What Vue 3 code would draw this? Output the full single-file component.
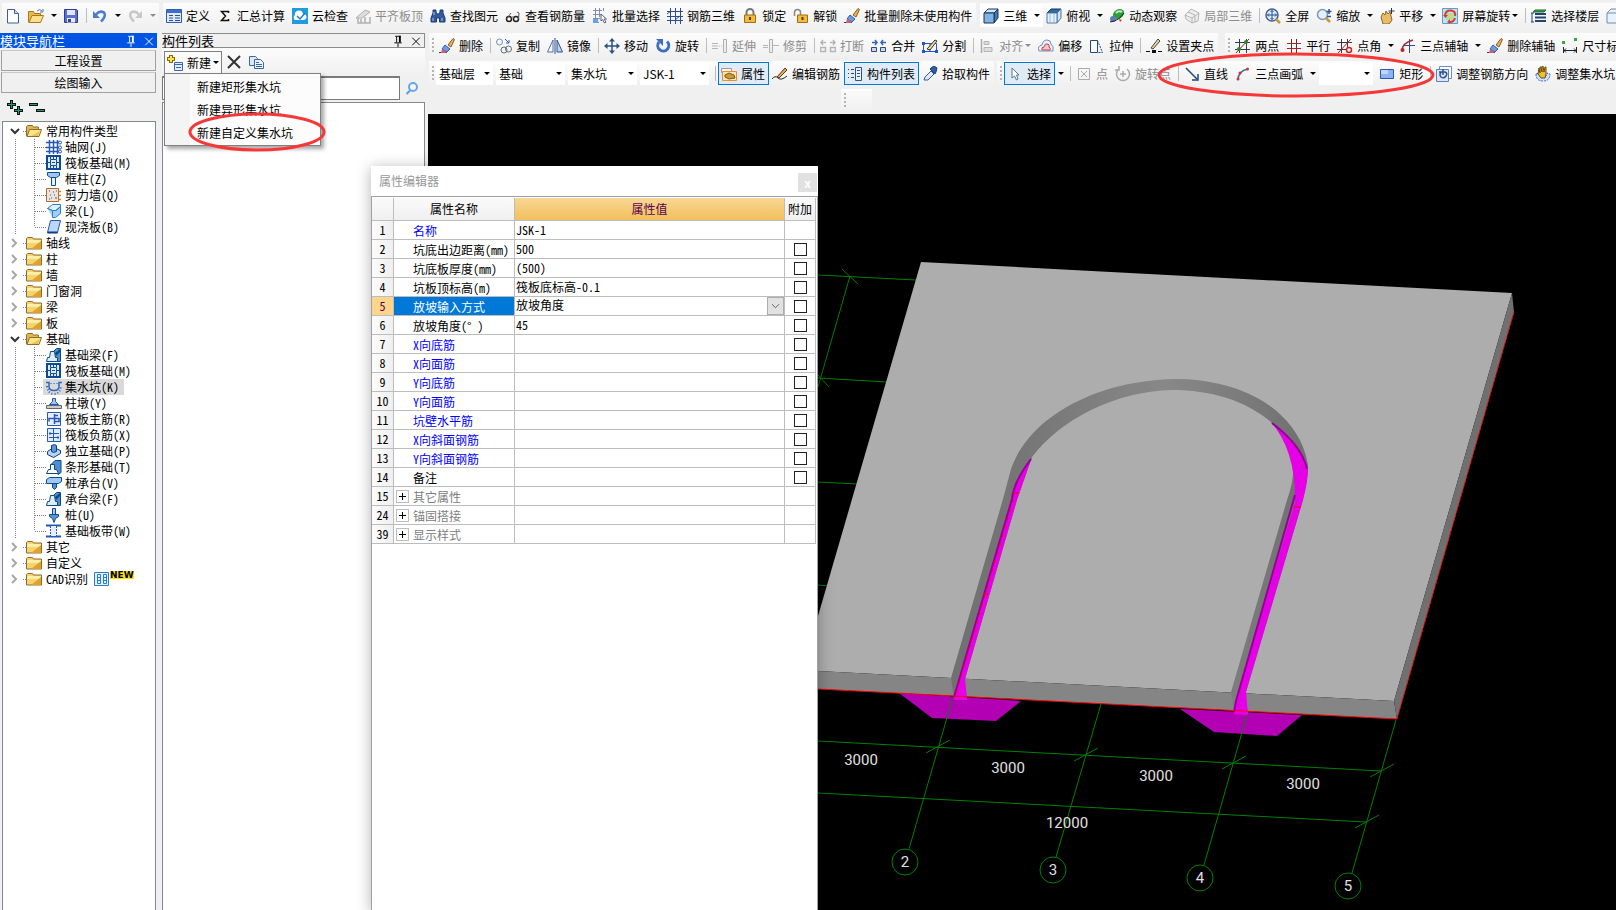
<template>
  <div class="app">
    <header class="toolbar-row top-row">
      <div v-for="(bar, b) in topBars" :key="b" class="bar">
        <template v-for="(tool, i) in bar" :key="i">
          <span v-if="tool.sep" class="sep"></span>
          <template v-else>
            <button
              type="button"
              class="tool"
              :class="{ white: tool.white }"
              :disabled="tool.off"
              :aria-label="tool.label || tool.icon"
            >
              <svg class="icon" viewBox="0 0 16 16" v-html="icons[tool.icon]"></svg>
              <span v-if="tool.label" class="label">{{ tool.label }}</span>
              <i v-if="tool.menu" class="arrow menu-arrow"></i>
            </button>
            <button
              v-if="tool.split"
              type="button"
              class="split"
              :class="{ white: tool.white }"
              :disabled="tool.off"
              aria-label="更多"
            >
              <i class="arrow"></i>
            </button>
          </template>
        </template>
      </div>
    </header>

    <div class="body">
      <!-- Module navigation -->
      <aside class="nav">
        <div class="panel-title active">
          <span class="title-text">模块导航栏</span>
          <svg class="title-icon" viewBox="0 0 16 16" v-html="icons.pin"></svg>
          <svg class="title-icon" viewBox="0 0 16 16" v-html="icons.close"></svg>
        </div>
        <button type="button" class="nav-tab">工程设置</button>
        <button type="button" class="nav-tab">绘图输入</button>
        <div class="nav-tools">
          <button type="button" aria-label="展开全部">
            <svg class="icon" viewBox="0 0 16 16" v-html="icons.expand"></svg>
          </button>
          <button type="button" aria-label="折叠全部">
            <svg class="icon" viewBox="0 0 16 16" v-html="icons.collapse"></svg>
          </button>
        </div>
        <ul class="tree">
          <li v-for="group in tree" :key="group.name">
            <div class="tree-root">
              <svg class="root-guide" viewBox="0 0 23 16">
                <path v-if="group.children" d="M8 6l4 4 4-4" fill="none" stroke="#333" stroke-width="2" />
                <path v-else d="M9 4l4 4-4 4" fill="none" stroke="#a6a6a6" stroke-width="2" />
                <path d="M20 8.5h3" stroke="#808080" stroke-dasharray="1 1" />
              </svg>
              <svg
                class="icon"
                viewBox="0 0 16 16"
                v-html="group.children ? icons.folderOpen : icons.folder"
              ></svg>
              <span class="root-name"><span v-if="group.prefix" class="half">{{ group.prefix }}</span>{{ group.name }}</span>
              <template v-if="group.isNew">
                <svg class="icon cad-icon" viewBox="0 0 16 16" v-html="icons.cad"></svg>
                <span class="new-tag">NEW</span>
              </template>
            </div>
            <ul v-if="group.children">
              <li v-for="(item, i) in group.children" :key="item[1]" class="tree-child">
                <svg class="child-guide" viewBox="0 0 40 16">
                  <g stroke="#808080" stroke-dasharray="1 1">
                    <path d="M12.5 0v16" />
                    <path :d="i === group.children.length - 1 ? 'M31.5 0v8' : 'M31.5 0v16'" />
                    <path d="M32 8.5h12" />
                  </g>
                </svg>
                <button type="button" class="tree-item" :class="{ selected: item[1] === selected }" @click="selected = item[1]">
                  <svg class="icon" viewBox="0 0 16 16" v-html="icons[item[2]]"></svg>
                  <span>{{ item[0] }}<span class="half">({{ item[3] }})</span></span>
                </button>
              </li>
            </ul>
          </li>
        </ul>
      </aside>

      <!-- Component list -->
      <section class="list-panel">
        <div class="panel-title">
          <span class="title-text">构件列表</span>
          <svg class="title-icon" viewBox="0 0 16 16" v-html="icons.pin"></svg>
          <svg class="title-icon" viewBox="0 0 16 16" v-html="icons.close"></svg>
        </div>
        <div class="list-tools">
          <div class="new-wrap">
            <button type="button" class="new-btn">
              <svg class="icon" viewBox="0 0 16 16" v-html="icons.create"></svg>
              <span class="label">新建</span>
              <i class="arrow menu-arrow"></i>
            </button>
            <div class="new-menu">
              <button v-for="entry in newMenu" :key="entry" type="button">{{ entry }}</button>
            </div>
            <svg class="mark mark-menu" viewBox="0 0 138 40">
              <ellipse cx="69" cy="20" rx="67" ry="18" />
            </svg>
          </div>
          <button type="button" class="list-btn" aria-label="删除">
            <svg class="icon" viewBox="0 0 16 16" v-html="icons.cross"></svg>
          </button>
          <button type="button" class="list-btn" aria-label="复制">
            <svg class="icon" viewBox="0 0 16 16" v-html="icons.docs"></svg>
          </button>
        </div>
        <div class="search">
          <input type="text" aria-label="搜索构件" />
          <button type="button" aria-label="搜索">
            <svg class="icon" viewBox="0 0 16 16" v-html="icons.search"></svg>
          </button>
        </div>
        <div class="list-body"></div>
      </section>

      <main class="main">
        <div class="toolbar-row edit-row">
          <div v-for="(bar, b) in editBars" :key="b" class="bar">
            <span class="grip"></span>
            <template v-for="(tool, i) in bar" :key="i">
              <span v-if="tool.sep" class="sep"></span>
              <template v-else>
                <button type="button" class="tool" :disabled="tool.off">
                  <svg class="icon" viewBox="0 0 16 16" v-html="icons[tool.icon]"></svg>
                  <span class="label">{{ tool.label }}</span>
                  <i v-if="tool.menu" class="arrow menu-arrow"></i>
                </button>
                <button v-if="tool.split" type="button" class="split" aria-label="更多">
                  <i class="arrow"></i>
                </button>
              </template>
            </template>
          </div>
        </div>

        <div class="toolbar-row draw-row">
          <div v-for="(bar, b) in drawBars" :key="b" class="bar">
            <span class="grip"></span>
            <template v-for="(tool, i) in bar" :key="i">
              <span v-if="tool.sep" class="sep"></span>
              <span v-else-if="tool.combo" class="combo" :class="tool.size">
                <select :aria-label="tool.combo">
                  <option>{{ tool.value }}</option>
                </select>
                <i class="arrow"></i>
              </span>
              <template v-else>
                <button type="button" class="tool" :class="{ on: tool.on }" :disabled="tool.off">
                  <svg class="icon" viewBox="0 0 16 16" v-html="icons[tool.icon]"></svg>
                  <span class="label">{{ tool.label }}</span>
                </button>
                <button v-if="tool.split" type="button" class="split" aria-label="更多">
                  <i class="arrow"></i>
                </button>
              </template>
            </template>
          </div>
          <svg class="mark mark-draw" viewBox="0 0 278 46">
            <ellipse cx="139" cy="23" rx="137" ry="21" />
          </svg>
        </div>

        <div class="toolbar-row spare-row">
          <div class="bar spare"><span class="grip"></span></div>
        </div>

        <!-- 3D view -->
        <svg class="scene" viewBox="428 114 1188 796" preserveAspectRatio="xMinYMin slice">
          <defs>
            <linearGradient id="ring" x1="0" x2="1" y1="0" y2="0">
              <stop offset="0" stop-color="#707070" />
              <stop offset="0.2" stop-color="#767676" />
              <stop offset="0.6" stop-color="#888" />
              <stop offset="1" stop-color="#707070" />
            </linearGradient>
          </defs>
          <g stroke="#008000" fill="none">
            <path d="M818 275L916 280M818 378L887 382M818 482L858 484M818 585L829 586" />
            <path d="M850 276L818 387M842 269L858 284M818 375L829 387" />
          </g>
          <polygon points="921,262 1512,293 1394,701 818,671 818,616" fill="#adadad" />
          <polygon points="818,671 1394,701 1397,719 818,689" fill="#858585" />
          <polygon points="1512,293 1514,312 1397,719 1394,701" fill="#707070" />
          <polygon points="899,693 932,718 996,721 1021,701" fill="#b400b4" />
          <polygon points="1180,709 1214,732 1277,736 1302,715" fill="#b400b4" />
          <path
            fill="url(#ring)"
            d="M951 678L1003 499L1011 469C1030 415 1100 379 1180 379C1250 381 1300 415 1308 465L1308 470L1303 500L1246 692L1248 714L1234 712L1231 692L1287 500Q1294 480 1293 468Q1288 438 1271 422C1245 400 1210 390 1172 390C1115 391 1060 420 1032 457L1017 500L965 679L967 700L954 698Z"
          />
          <path fill="#e600e6" d="M1032 457Q1014 481 1012 499L954 697L954 700L967 700L965 679L1017 500Z" />
          <path fill="none" stroke="#960096" stroke-width="2" d="M1031 459Q1014 481 1012 499L954 697" />
          <path fill="none" stroke="#f00" stroke-dasharray="3 6" d="M1013 500L956 693" />
          <path
            fill="#e600e6"
            d="M1271 422Q1301 444 1308 469Q1308 482 1303 500L1246 692L1248 715L1234 714L1236 701L1295 502Q1296 451 1271 422Z"
          />
          <path fill="none" stroke="#960096" stroke-width="2" d="M1272 423Q1302 446 1307 469M1295 495L1236 701L1234 712" />
          <g stroke="#f00" fill="none">
            <path d="M818 689L1397 719" />
            <path d="M1514 312L1397 719" stroke-dasharray="4 1" />
            <path d="M1013 493h6M983 594h5M1294 507h6" />
          </g>
          <g stroke="#008000" fill="none">
            <path v-for="axis in axes" :key="axis.no" :d="axis.line" />
            <path d="M818 741L1381 771M818 793L1366 822" />
            <path v-for="t in ticks" :key="t[0]" :d="`M${t[0] - 11} ${t[1] + 6}l24 -13`" />
            <circle v-for="axis in axes" :key="axis.no" :cx="axis.x" :cy="axis.y" r="13" />
          </g>
          <g class="scene-text">
            <text v-for="d in dims" :key="d[0]" :x="d[0]" :y="d[1]">{{ d[2] }}</text>
            <text v-for="axis in axes" :key="axis.no" :x="axis.x" :y="axis.y + 5">{{ axis.no }}</text>
          </g>
        </svg>
      </main>
    </div>

    <!-- Property editor -->
    <section class="props">
      <div class="props-title">
        <span>属性编辑器</span>
        <button type="button" aria-label="关闭">x</button>
      </div>
      <div class="props-body">
        <table>
          <colgroup>
            <col class="col-no" />
            <col class="col-name" />
            <col />
            <col class="col-extra" />
          </colgroup>
          <thead>
            <tr>
              <th></th>
              <th>属性名称</th>
              <th class="current">属性值</th>
              <th>附加</th>
            </tr>
          </thead>
          <tbody>
            <tr v-for="row in rows" :key="row.no" :class="{ picked: row.no === 5 }">
              <th class="half">{{ row.no }}</th>
              <td class="name" :class="row.tone">
                <div class="name-line">
                  <button v-if="row.tone === 'fold'" type="button" class="plus" aria-label="展开"></button>
                  <span><span v-if="row.axis" class="half">{{ row.axis }}</span>{{ row.name }}<span v-if="row.unit" class="half">{{ row.unit }}</span></span>
                </div>
              </td>
              <td class="value">
                <div v-if="row.no === 5" class="value-select">
                  <select aria-label="放坡输入方式">
                    <option>{{ row.text }}</option>
                  </select>
                  <svg viewBox="0 0 17 18"><path d="M4.5 7l4 4 4-4" fill="none" stroke="#555" /></svg>
                </div>
                <template v-else>{{ row.text }}<span class="half">{{ row.value }}</span></template>
              </td>
              <td class="extra">
                <input v-if="row.check" type="checkbox" :aria-label="'附加 ' + row.name" />
              </td>
            </tr>
          </tbody>
        </table>
      </div>
    </section>
  </div>
</template>

<script setup>
import { ref } from "vue";

const selected = ref("pit");

const sep = { sep: true };

const topBars = [
  [
    { icon: "file" },
    { icon: "open", split: true },
    { icon: "save" },
    sep,
    { icon: "undo", split: true },
    { icon: "redo", split: true, off: true },
  ],
  [
    { icon: "define", label: "定义" },
    { icon: "sigma", label: "汇总计算" },
    { icon: "cloud", label: "云检查" },
    { icon: "alignTop", label: "平齐板顶", off: true },
    { icon: "binoculars", label: "查找图元" },
    { icon: "glasses", label: "查看钢筋量" },
    { icon: "batch", label: "批量选择" },
    { icon: "rebar3d", label: "钢筋三维" },
    { icon: "lock", label: "锁定" },
    { icon: "unlock", label: "解锁" },
    { icon: "brush", label: "批量删除未使用构件" },
  ],
  [
    { icon: "cube", label: "三维", split: true, white: true },
    { icon: "cubeTop", label: "俯视", split: true },
    { icon: "orbit", label: "动态观察" },
    { icon: "partial", label: "局部三维", off: true },
    sep,
    { icon: "fullscreen", label: "全屏" },
    { icon: "zoom", label: "缩放", split: true },
    { icon: "pan", label: "平移", split: true },
    { icon: "screenRotate", label: "屏幕旋转", menu: true },
    sep,
    { icon: "floors", label: "选择楼层" },
    { icon: "wire" },
  ],
];

const editBars = [
  [
    { icon: "brush", label: "删除" },
    sep,
    { icon: "copy", label: "复制" },
    { icon: "mirror", label: "镜像" },
    sep,
    { icon: "move", label: "移动" },
    { icon: "rotate", label: "旋转" },
    sep,
    { icon: "extend", label: "延伸", off: true },
    { icon: "trim", label: "修剪", off: true },
    sep,
    { icon: "break", label: "打断", off: true },
    { icon: "merge", label: "合并" },
    { icon: "split", label: "分割" },
    sep,
    { icon: "align", label: "对齐", menu: true, off: true },
    { icon: "offset", label: "偏移" },
    { icon: "stretch", label: "拉伸" },
    sep,
    { icon: "gripPoint", label: "设置夹点" },
  ],
  [
    { icon: "twoPoint", label: "两点" },
    { icon: "parallel", label: "平行" },
    { icon: "angle", label: "点角", split: true },
    { icon: "threeAxis", label: "三点辅轴", split: true },
    { icon: "brush", label: "删除辅轴" },
    { icon: "dimension", label: "尺寸标" },
  ],
];

const drawBars = [
  [
    { combo: "楼层", value: "基础层", size: "narrow" },
    { combo: "类型", value: "基础" },
    { combo: "构件类型", value: "集水坑" },
    { combo: "构件", value: "JSK-1" },
    sep,
    { icon: "property", label: "属性", on: true },
    { icon: "editRebar", label: "编辑钢筋" },
    { icon: "list", label: "构件列表", on: true },
    { icon: "picker", label: "拾取构件" },
  ],
  [
    { icon: "cursor", label: "选择", on: true, split: true },
    sep,
    { icon: "point", label: "点", off: true },
    { icon: "rotatePoint", label: "旋转点", off: true },
    sep,
    { icon: "line", label: "直线" },
    { icon: "arc", label: "三点画弧", split: true },
    { combo: "画法", value: "", size: "tiny" },
    { icon: "rect", label: "矩形" },
    sep,
    { icon: "rebarDir", label: "调整钢筋方向" },
    { icon: "pitDir", label: "调整集水坑" },
  ],
];

const newMenu = ["新建矩形集水坑", "新建异形集水坑", "新建自定义集水坑"];

// child: [name, id, icon, shortcut]
const tree = [
  {
    name: "常用构件类型",
    children: [
      ["轴网", "grid", "grid", "J"],
      ["筏板基础", "raft-common", "raft", "M"],
      ["框柱", "column", "column", "Z"],
      ["剪力墙", "wall", "wall", "Q"],
      ["梁", "beam", "beam", "L"],
      ["现浇板", "slab", "slab", "B"],
    ],
  },
  { name: "轴线" },
  { name: "柱" },
  { name: "墙" },
  { name: "门窗洞" },
  { name: "梁" },
  { name: "板" },
  {
    name: "基础",
    children: [
      ["基础梁", "base-beam", "baseBeam", "F"],
      ["筏板基础", "raft", "raft", "M"],
      ["集水坑", "pit", "pit", "K"],
      ["柱墩", "pier", "pier", "Y"],
      ["筏板主筋", "raft-main", "raftMain", "R"],
      ["筏板负筋", "raft-neg", "raftNeg", "X"],
      ["独立基础", "isolated", "isolated", "P"],
      ["条形基础", "strip", "strip", "T"],
      ["桩承台", "cap", "cap", "V"],
      ["承台梁", "cap-beam", "baseBeam", "F"],
      ["桩", "pile", "pile", "U"],
      ["基础板带", "band", "band", "W"],
    ],
  },
  { name: "其它" },
  { name: "自定义" },
  { prefix: "CAD", name: "识别", isNew: true },
];

const rows = [
  { no: 1, name: "名称", tone: "blue", value: "JSK-1" },
  { no: 2, name: "坑底出边距离", unit: "(mm)", value: "500", check: true },
  { no: 3, name: "坑底板厚度", unit: "(mm)", value: "(500)", check: true },
  { no: 4, name: "坑板顶标高", unit: "(m)", text: "筏板底标高", value: "-0.1", check: true },
  { no: 5, name: "放坡输入方式", text: "放坡角度", check: true },
  { no: 6, name: "放坡角度", unit: "(° )", value: "45", check: true },
  { no: 7, axis: "X", name: "向底筋", tone: "blue", check: true },
  { no: 8, axis: "X", name: "向面筋", tone: "blue", check: true },
  { no: 9, axis: "Y", name: "向底筋", tone: "blue", check: true },
  { no: 10, axis: "Y", name: "向面筋", tone: "blue", check: true },
  { no: 11, name: "坑壁水平筋", tone: "blue", check: true },
  { no: 12, axis: "X", name: "向斜面钢筋", tone: "blue", check: true },
  { no: 13, axis: "Y", name: "向斜面钢筋", tone: "blue", check: true },
  { no: 14, name: "备注", check: true },
  { no: 15, name: "其它属性", tone: "fold" },
  { no: 24, name: "锚固搭接", tone: "fold" },
  { no: 39, name: "显示样式", tone: "fold" },
];

const axes = [
  { no: 2, x: 905, y: 862, line: "M953 697L909 849" },
  { no: 3, x: 1053, y: 870, line: "M1101 704L1056 857" },
  { no: 4, x: 1200, y: 878, line: "M1247 715L1204 865" },
  { no: 5, x: 1348, y: 886, line: "M1396 720L1352 873" },
];

const ticks = [
  [937, 747],
  [1085, 755],
  [1233, 763],
  [1381, 771],
  [1366, 822],
];

const dims = [
  [861, 765, "3000"],
  [1008, 773, "3000"],
  [1156, 781, "3000"],
  [1303, 789, "3000"],
  [1067, 828, "12000"],
];

const icons = {
  file: '<path d="M2.500 1.500h7l4 4v9.500h-11z" fill="#fff" stroke="#3b5f94"/><path d="M9.500 1.500v4h4" fill="#cfe0f5" stroke="#3b5f94"/>',
  open: '<path d="M.5 14V3.500h5l1 2h6V14z" fill="#e9b94a" stroke="#a8781c"/><path d="M1 14.500l3-7h11.500l-3 7z" fill="#ffe08a" stroke="#a8781c"/><path d="M9 3q3-3 5 0M15 1v3h-3" fill="none" stroke="#5a789c"/>',
  save: '<path d="M1.500 1.500h12l1 1v12h-13z" fill="#5a6fd0" stroke="#2d3c96"/><path d="M4 2h8v5H4z" fill="#dfe8fa"/><path d="M4 10h8v4.500H4z" fill="#e8ecf5"/><path d="M5 11h3v3H5z" fill="#33418c"/>',
  undo: '<path d="M4 6.500Q8 2 12 4.500Q14.500 8 9 13.500" fill="none" stroke="#4a7bd0" stroke-width="2.500"/><path d="M1 3v7h7z" fill="#4a7bd0"/>',
  redo: '<path d="M12 6.500Q8 2 4 4.500Q1.500 8 7 13.500" fill="none" stroke="#c8c8c8" stroke-width="2.500"/><path d="M15 3v7H8z" fill="#c8c8c8"/>',
  define: '<path d="M.5 1.500h15v13H.5z" fill="#dfeaff" stroke="#2f5db0"/><path d="M1 2h14v3H1z" fill="#3f6fc8"/><path d="M3 7.500h4M3 10h4M3 12.500h4M9 7.500h5M9 10h5M9 12.500h5" stroke="#2f4f90"/>',
  sigma: '<path d="M11.500 5V3.500H4.500L8.500 8l-4 4.500h7V11" fill="none" stroke="#111" stroke-width="1.500"/>',
  cloud: '<path d="M0 0h16v16H0z" fill="#1f9be0"/><path d="M3 12a3 3 0 010-5a4 4 0 018-1a3 3 0 011 6z" fill="#fff"/><path d="M5 8l3 3 5-6" fill="none" stroke="#1f7fc0" stroke-width="1.500"/>',
  alignTop: '<path d="M1 10L10 2l5 2-8 6z" fill="#ddd" stroke="#b0b0b0"/><path d="M3 10v5h12V9M6 15v-4M10 15v-6" fill="none" stroke="#b0b0b0" stroke-width="1.500"/>',
  binoculars: '<path d="M3 2h3v2l1 2h2l1-2V2h3v3l2 5v4H9.500v-4h-3v4H1v-4l2-5z" fill="#345ba0" stroke="#1d3a70"/><path d="M3 10v3M12 10v3M4 4v3" stroke="#a9c6f5"/>',
  glasses: '<circle cx="4" cy="11" r="2.500" fill="none" stroke="#222" stroke-width="1.500"/><circle cx="11" cy="11" r="2.500" fill="none" stroke="#222" stroke-width="1.500"/><path d="M6 10q1.500-2 3 0M13.500 11L14 5l-2-1M1.500 11L6 5" fill="none" stroke="#555"/>',
  batch: '<path d="M1 2.500h9M1 6.500h9M1 10.500h7M3.500 0v11M7.500 0v9M1 14.500h6M11.500 0v3" stroke="#8090ac"/><path d="M1 11h5v4H1z" fill="#6aa0f0"/><path d="M9 6v7l1.500-1.500 2 3.500 1.500-1-2-3h2.500z" fill="#fff" stroke="#52637c"/>',
  rebar3d: '<path d="M0 3.500h16M0 8.500h16M0 12.500h16M3.500 0v16M8.500 0v16M13.500 0v16M0 6l4-3M8 12l5-4" stroke="#2e4c8c" fill="none"/>',
  lock: '<path d="M4.500 7V4.500a3.500 3.500 0 017 0V7" fill="none" stroke="#777" stroke-width="2"/><path d="M2.500 7h11v7.500h-11z" fill="#f3bc3e" stroke="#a36e10"/><path d="M8 9v3" stroke="#5c3b05" stroke-width="2"/>',
  unlock: '<path d="M1.500 8V4.500a3 3 0 016 0V7" fill="none" stroke="#888" stroke-width="1.500"/><path d="M4.500 7h10v7.500h-10z" fill="#f3bc3e" stroke="#a36e10"/><path d="M9.500 9v3" stroke="#5c3b05" stroke-width="2"/>',
  brush: '<path d="M0 14.500h8" stroke="#223a7a"/><path d="M9 7l5-6.500 1.500 1L12 9z" fill="#e8b15a" stroke="#8b5a1c"/><path d="M6 7l5 4-3 3-5-3z" fill="#6f9be0" stroke="#2f5db0"/><path d="M3 11l5 3-2 1H2z" fill="#d0606a"/>',
  cube: '<path d="M1 5l4-4h10l-4 4z" fill="#cfe6fa" stroke="#1d3557"/><path d="M11 5l4-4v9l-4 5z" fill="#3f78b5" stroke="#1d3557"/><path d="M1 5h10v10H1z" fill="#7fb4e3" stroke="#1d3557"/>',
  cubeTop: '<path d="M1 5l4-4h10l-4 4z" fill="#2f6aa8" stroke="#1d3557"/><path d="M11 5l4-4v9l-4 5z" fill="#cfe2f5" stroke="#52789c"/><path d="M1 5h10v10H1z" fill="#e4f0fb" stroke="#52789c"/><path d="M4 6v8M8 6v8" stroke="#9dbbd8"/>',
  orbit: '<ellipse cx="9.500" cy="6" rx="6" ry="4.500" transform="rotate(-35 9.500 6)" fill="#2f9e3c"/><path d="M7 5q3-3 6-1" stroke="#bff0b8" fill="none" stroke-width="2"/><circle cx="4" cy="11" r="3" fill="#5a7fae"/><path d="M1 14Q10 13 15 5" stroke="#223" fill="none"/><path d="M10 11l3 1-2 2z" fill="#d33"/>',
  partial: '<path d="M1 7l6-6 8 4-1 8-6 2-6-4zM1 7l7 3 7-5M8 10v5M4 4l7 3v7" fill="#eee" stroke="#b5b5b5"/>',
  fullscreen: '<circle cx="7" cy="7" r="6" fill="#e3effc" stroke="#41618f" stroke-width="1.500"/><path d="M7 2.500v9M2.500 7h9M5.500 4L7 2.500 8.500 4M5.500 10L7 11.500 8.500 10M4 5.500L2.500 7 4 8.500M10 5.500L11.500 7 10 8.500" fill="none" stroke="#1f4a96"/><path d="M11 11l4 4" stroke="#c49a3a" stroke-width="2.500"/>',
  zoom: '<circle cx="6.500" cy="6.500" r="5" fill="#e3effc" stroke="#7c97b8" stroke-width="1.500"/><path d="M10 10l4 4" stroke="#c49a3a" stroke-width="2.500"/><path d="M13 1v5M10.500 3.500h5M11 8.500h4" stroke="#2f5596" stroke-width="1.500"/>',
  pan: '<path d="M2 9l2-4 2 2 1-4 2 3 2-2 1 4 1 4-3 4H4z" fill="#e9bd6b" stroke="#8a6425"/><path d="M12.500 0v6M9.500 3h6" stroke="#333"/>',
  screenRotate: '<path d="M.5 .5h15v15H.5z" fill="#bfe0f5" stroke="#5aa0cc"/><path d="M4 5h8v7H4z" fill="#b5dc9a"/><path d="M3 7q1-5 6-4.500T13 8M13 10q-1 4-5 4" fill="none" stroke="#e0382c" stroke-width="2"/><path d="M1 7h5l-2.500 3zM8 11v5l-3-2z" fill="#e0382c"/>',
  floors: '<path d="M4 2h11l-2 2H2z" fill="#3aa655" stroke="#1c6a34"/><path d="M4 6h11M4 9.500h11M4 13h11" stroke="#24446e" stroke-width="2"/><path d="M1 5v9M0 5h3M0 14h3" stroke="#24446e"/>',
  wire: '<path d="M1 5l4-4h10v10l-4 4H1zM1 5h10v10M11 5l4-4" fill="#e9f1fa" stroke="#6d8fb5"/>',
  copy: '<circle cx="3.500" cy="4" r="3" fill="none" stroke="#7690b0"/><circle cx="8" cy="12" r="3" fill="none" stroke="#5d6f85"/><circle cx="12.500" cy="11" r="3" fill="none" stroke="#5d6f85"/><path d="M9 1l4 4M13 2v3h-3" fill="none" stroke="#2f5db0"/>',
  mirror: '<path d="M6 2v12H.500z" fill="#fff" stroke="#4d6fa8"/><path d="M10 2v12h5.500z" fill="#c3d5f0" stroke="#2d4f90"/><path d="M8 0v16" stroke="#2d4f90"/>',
  move: '<path d="M8 2v12M2 8h12" stroke="#2c5282" stroke-width="1.500"/><path d="M8 0l3 3.500H5zM8 16l3-3.500H5zM0 8l3.500-3v6zM16 8l-3.500-3v6z" fill="#2c5282"/>',
  rotate: '<path d="M4 4a5.500 5.500 0 108-.5" fill="none" stroke="#3c6ec4" stroke-width="3"/><path d="M1 1h7v7z" fill="#3c6ec4"/>',
  extend: '<path d="M0 8h6M0 5.500h6M0 10.500h6" stroke="#b5b5b5"/><path d="M7 8h3" stroke="#b5b5b5" stroke-dasharray="1 1"/><path d="M11.500 1.500h3v13h-3z" fill="#eee" stroke="#b0b0b0"/>',
  trim: '<path d="M0 7.500h5M0 9.500h5M10 7.500h6" stroke="#b5b5b5"/><path d="M6.500 1.500h3v13h-3z" fill="#eee" stroke="#b0b0b0"/>',
  break: '<path d="M1 4.500h5M10 4.500h5M3 2L1 4.500 3 7M13 2l2 2.500L13 7M.500 9.500h5v4h-5zM10.500 9.500h5v4h-5z" fill="none" stroke="#b5b5b5" stroke-width="1.500"/>',
  merge: '<path d="M1 4.500h5M10 4.500h5M4 2l2 2.500L4 7M12 2l-2 2.500L12 7" fill="none" stroke="#3465b5" stroke-width="1.500"/><path d="M.500 9.500h5v4h-5zM9.500 9.500h5v4h-5z" fill="#cfd9e8" stroke="#2c4a7a"/>',
  split: '<path d="M1.500 5.500h13v8h-13zM8 5v9" fill="none" stroke="#2255cc"/><path d="M0 4h3v3H0zM0 12h3v3H0zM13 12h3v3h-3z" fill="#2255cc"/><path d="M5 11l8-9 2 1-7 9z" fill="#eed9a0" stroke="#333"/>',
  align: '<path d="M2.500 1v14" stroke="#aaa" stroke-width="1.500"/><path d="M5 3.500h5v3H5zM5 9.500h8v4H5z" fill="#ddd" stroke="#b5b5b5"/>',
  offset: '<path d="M1 13q-2-5 3-6 1-5 5-5 4 0 4 4 3 2 2 7z" fill="#e8f1fc" stroke="#6a8fc0"/><path d="M4 12q-1-3 2-3 1-4 3-3 3 0 2 3 2 1 1 3z" fill="#f7c9c9" stroke="#d04040"/>',
  stretch: '<path d="M1.500 2.500h7v12h-7z" fill="#fff" stroke="#1f4a86"/><path d="M8.500 2.500l5 12h-5" fill="none" stroke="#1f4a86" stroke-dasharray="2 1"/>',
  gripPoint: '<path d="M0 13.500h16" stroke="#111" stroke-dasharray="4 2"/><path d="M5 10l7-9 2 2-7 8z" fill="#ead7a0" stroke="#444"/><path d="M6 12h4v3H6z" fill="#111"/>',
  twoPoint: '<path d="M4.500 1v14M11.500 1v14M0 4.500h15M0 11.500h15" stroke="#333c4a"/><path d="M1 15L14 1" stroke="#992020"/><circle cx="4" cy="11" r="2" fill="#2a8a2a"/><circle cx="11" cy="4" r="2" fill="#2a8a2a"/>',
  parallel: '<path d="M5.500 1v14M10.500 1v14" stroke="#333c4a"/><path d="M1 5.500h14M1 10.500h14" stroke="#b02020"/>',
  angle: '<path d="M4.500 1v14M10.500 1v8M0 4.500h15M0 11.500h9" stroke="#333c4a"/><path d="M1 15L14 1" stroke="#b02020"/><circle cx="12" cy="12" r="2.500" fill="#fff" stroke="#d02020" stroke-width="1.500"/>',
  threeAxis: '<path d="M2 13Q2 5 13 2" fill="none" stroke="#c02020" stroke-width="1.500"/><path d="M9.500 1v14M3 7.500h12" stroke="#2e4c8c"/><circle cx="2.500" cy="12" r="2" fill="#c02020"/>',
  dimension: '<path d="M0 3h3v3H0zM12 0h3v3h-3z" fill="#2faa3a"/><path d="M1.500 9v6M14.500 9v6M2 12.500h12M4 10.500l-2 2 2 2M12 10.500l2 2-2 2" fill="none" stroke="#222"/>',
  property: '<path d="M.5 2.500h10v4H.5z" fill="#f7f7f7" stroke="#999"/><path d="M1.500 5.500h14v9h-14z" fill="#ffe3b0" stroke="#f08a2a"/><path d="M4 9l4-2 5 2 1 3-6 1-4-2z" fill="#c79a3c" stroke="#7a5a18"/>',
  editRebar: '<path d="M0 13q3-4 6-1t9-2" fill="none" stroke="#222"/><path d="M5 11l8-9 2 2-8 8z" fill="#e0a860" stroke="#5a3a14"/>',
  list: '<path d="M1 3.500h1M4 3.500h3M1 7.500h1M4 7.500h3M1 11.500h1M4 11.500h3" stroke="#444"/><path d="M8.500 1.500h6v13h-6z" fill="#e9f1fc" stroke="#2f4f90"/><path d="M10 4.500h3M10 7.500h3M10 10.500h3" stroke="#2f4f90"/>',
  picker: '<path d="M2 14l1-3 6-6 3 3-6 6z" fill="#dceafb" stroke="#335c99"/><path d="M8 3l5 5 1-2 1-4-3-2-3 2z" fill="#2f5fa8" stroke="#1d3f78"/>',
  cursor: '<path d="M5 2v10l2.500-2 2 4 1.500-1-1.500-4H12z" fill="#fff" stroke="#5b7393"/>',
  point: '<path d="M2.500 2.500h11v11h-11z" fill="none" stroke="#aaa"/><path d="M5 5l6 6M11 5l-6 6" stroke="#aaa"/>',
  rotatePoint: '<path d="M4 3a6.500 6.500 0 108 0M4 0v4H0M8 5v6M5 8h6" fill="none" stroke="#aaa" stroke-width="1.500"/>',
  line: '<path d="M2 2l11 11" stroke="#22447a" stroke-width="1.500"/><path d="M14 8v6H8" fill="none" stroke="#22447a" stroke-width="1.500"/>',
  arc: '<path d="M3 14Q3 5 13 3" fill="none" stroke="#3a66b0" stroke-width="1.500"/><circle cx="12.500" cy="3" r="1.500" fill="#c33"/><circle cx="5" cy="7" r="1.500" fill="#c33"/><circle cx="3" cy="13" r="1.500" fill="#c33"/>',
  rect: '<path d="M1.500 3.500h13v9h-13z" fill="#8fb2f5" stroke="#2b55b8"/><path d="M2 4h7v4H2z" fill="#c3d6fb"/>',
  rebarDir: '<path d="M3.500 .5h12v12h-12z" fill="#fff" stroke="#6d8fc0"/><path d="M.5 3.500h12v12H.5z" fill="#dce8f8" stroke="#5c7fb8"/><path d="M3 6h6q3 1 1 4t-5 1q-2-2 0-5M7 3v6" fill="none" stroke="#2e5490" stroke-width="1.500"/>',
  pitDir: '<path d="M1 8q0 7 7 7t7-7l-3-1q0 4-4 4T4 7z" fill="#cfe2fb" stroke="#2f68c0" stroke-dasharray="2 1"/><path d="M4 2l1 5 0-6h1l1 5V0h1l1 6 1-5h1v7l-1 4H6L3 8z" fill="#f0c030" stroke="#6a4a10"/>',
  pin: '<path d="M5 3.500h6M6.500 4v6M4 10.500h8M8 11v4" fill="none" stroke="currentColor"/><path d="M9 3h2v7H9z" fill="currentColor"/>',
  close: '<path d="M4 5l8 8M12 5l-8 8" stroke="currentColor"/>',
  expand: '<path d="M0 5.500h9M4.500 1v9M7 11.500h9M11.500 7v9" stroke="#111" stroke-width="3"/><path d="M1 5.500h7M4.500 2v7M8 11.500h7M11.500 8v7" stroke="#1f9a84"/>',
  collapse: '<path d="M0 5.500h9M7 11.500h9" stroke="#111" stroke-width="3"/><path d="M1 5.500h7M8 11.500h7" stroke="#1f9a84"/>',
  folder: '<path d="M.500 14V3.500l1-1h5l1 1.500h8v10z" fill="#f6d270" stroke="#8a6f30"/><path d="M1 5h14v3H1z" fill="#fdeea6"/><path d="M15 6v8H5z" fill="#e0a22c"/>',
  folderOpen: '<path d="M.500 13V3.500l1-1h5l1 1.500h5v9z" fill="#e3b84a" stroke="#8a6f30"/><path d="M1 13.500l2.500-7h12l-2.500 7z" fill="#fde48c" stroke="#8a6f30"/><path d="M14 8l-2 5H5z" fill="#f0bf4c"/>',
  grid: '<path d="M3.500 1v14M7.500 1v14M11.500 1v14M0 3.500h13M0 8.500h13M0 12.500h13" stroke="#2458b8" stroke-width="1.500"/><circle cx="14" cy="3.500" r="1.500" fill="none" stroke="#2458b8"/><circle cx="14" cy="8.500" r="1.500" fill="none" stroke="#2458b8"/><circle cx="14" cy="12.500" r="1.500" fill="none" stroke="#2458b8"/>',
  raft: '<path d="M1 1h13v13H1z" fill="#dcebfb" stroke="#0d4a94" stroke-width="2"/><path d="M4.500 4.500h6v6h-6zM4.500 1v3M7.500 1v3M10.500 1v3M4.500 11v3M7.500 11v3M10.500 11v3M1 7.500h3M11 7.500h3M6 7.500h3" fill="none" stroke="#0d4a94"/>',
  column: '<path d="M1.500 1.500h12v3l-3 2h-6l-3-2z" fill="#9fc6f2" stroke="#0d4a94"/><path d="M5.500 6.500h4v8h-4z" fill="#e8f2fd" stroke="#0d4a94"/>',
  wall: '<path d="M.500 1.500h12v13H.500z" fill="#e8e4e0" stroke="#b06a3a"/><path d="M3 4h1M7 5h1M10 4h1M4 8h1M8 8h1M5 11h1M9 11h2M3 12h1" stroke="#555"/><path d="M12 4.500h3M12 8.500h3M12 12.500h3" stroke="#e07a1c" stroke-width="1.500"/>',
  beam: '<path d="M1.500 5.500l5-4h8v2l-5 4h-3z" fill="#dff0fd" stroke="#2b7cc8"/><path d="M1.500 5.500l5 2v7M6.500 7.500l4 0 4-4v7l-5 4h-3" fill="#9fd0f5" stroke="#2b7cc8"/>',
  slab: '<path d="M4.500 1.500h10l-3 12h-10z" fill="#bcd6fa" stroke="#2458b8"/><path d="M1.500 13.500h10" stroke="#0d3a84" stroke-width="2"/>',
  baseBeam: '<path d="M6.500 5.500l4-4h4v13h-5z" fill="#4d8fd0" stroke="#0d4a84"/><path d="M.5 14.500l1-4h2l1-6h4l1 6h2v4z" fill="#dcebfb" stroke="#0d4a84"/><path d="M9 6l5-4v3l-4 4z" fill="#0d4a84"/>',
  pit: '<path d="M0 3.500h3v4q0 4 5 4t5-4v-4h3" fill="none" stroke="#2b66b8" stroke-width="1.500"/><path d="M1 7q1 8 7 8t7-8" fill="none" stroke="#2b66b8" stroke-dasharray="1 2" stroke-width="2"/><path d="M4 4.500h8" stroke="#5aa0e8" stroke-dasharray="2 1"/>',
  pier: '<path d="M6.500 3.500h3v3l3 3h-9l3-3z" fill="#9fc4f0" stroke="#2458b8"/><path d="M.500 10.500h15v3H.500z" fill="#ccc" stroke="#666"/>',
  raftMain: '<path d="M1.500 1.500h13v13h-13z" fill="#e8f0fd" stroke="#2458b8"/><path d="M8.500 3v10M3 10.500v-3h10v3H9M8 4.500h4" fill="none" stroke="#2458b8" stroke-width="1.500"/>',
  raftNeg: '<path d="M1.500 1.500h13v13h-13z" fill="#dfeafc" stroke="#2458b8"/><path d="M7.500 2v12M3 6.500h10M3 10.500h10M4 5v3M12 9v3" stroke="#2458b8"/>',
  isolated: '<path d="M1.500 8.500l6-4 7 3v3l-7 4-6-3z" fill="#b5d3f2" stroke="#0d3f78"/><path d="M5.500 2.500l3-1 2 1v6l-3 1-2-1z" fill="#5a96d4" stroke="#0d3f78"/>',
  strip: '<path d="M5 5.500l4-4h6v12l-3 2z" fill="#4d8fd0" stroke="#0d4a84"/><path d="M.500 14.500l2-4h2v-5h4v5h2l2 4z" fill="#fff" stroke="#0d4a84"/>',
  cap: '<path d="M.500 4.500l3-2h12v4l-3 2h-12z" fill="#9fc9f2" stroke="#0d4a94"/><path d="M6.500 8.500h4v4l-2 2-2-2z" fill="#4d8fd0" stroke="#0d4a94"/>',
  pile: '<path d="M6.500 1.500h3v6h-3z" fill="#9fc9f2" stroke="#0d4a94"/><path d="M3.500 7.500h9v2l-3 2-1.500 4-1.500-4-3-2z" fill="#5a96d4" stroke="#0d4a94"/>',
  band: '<path d="M0 2.500h15M0 13.500h15" stroke="#2458b8" stroke-width="2"/><path d="M5 3h5v10H5z" fill="#e5effc"/><path d="M4.500 3v10M10.500 3v10" stroke="#2458b8" stroke-dasharray="2 1"/>',
  cad: '<path d="M.500 1.500h14v13H.500z" fill="#e2f2fd" stroke="#2b7cc8"/><path d="M3.500 3.500h3v9h-3zM9.500 3.500h3v9h-3zM3 6.500h4M3 9.500h4M9 6.500h4M9 9.500h4" fill="none" stroke="#2b7cc8"/>',
  create: '<path d="M4 0v8M0 4h8" stroke="#8a6a10" stroke-width="4"/><path d="M4 1v6M1 4h6" stroke="#ffe24a" stroke-width="2"/><path d="M7.500 7.500h8v8h-8z" fill="#e3eefc" stroke="#3a66b0"/><path d="M8 9.500h7M9 12.500h5" stroke="#3a66b0"/>',
  cross: '<path d="M2 2l12 12M14 2L2 14" stroke="#333" stroke-width="2"/>',
  docs: '<path d="M1.500 2.500h6l2 2v7h-8z" fill="#dbe8fb" stroke="#3a66b0"/><path d="M6.500 5.500h6l3 3v6h-9z" fill="#eaf2fd" stroke="#3a66b0"/><path d="M8 8.500h3M8 10.500h6M8 12.500h6" stroke="#3a66b0"/>',
  search: '<circle cx="8" cy="6" r="4" fill="#eef7ff" stroke="#6aa7e0" stroke-width="2"/><path d="M5.500 9l-4 4" stroke="#5f9fe0" stroke-width="2"/>',
};
</script>

<style>
body {
  margin: 0;
  background: #f0f0f0;
}
</style>

<style scoped>
* {
  box-sizing: border-box;
}

.app {
  position: relative;
  display: flex;
  flex-direction: column;
  min-height: 100vh;
  overflow: hidden;
  background: #f0f0f0;
  color: #000;
  font-family: "Noto Sans CJK SC", sans-serif;
  font-size: 12px;
  line-height: 16px;
}

button,
input,
select {
  margin: 0;
  padding: 0;
  border: 0;
  background: none;
  color: inherit;
  font: inherit;
}

ul {
  margin: 0;
  padding: 0;
  list-style: none;
}

.half {
  font-family: "Noto Sans Mono CJK SC", "Noto Sans CJK SC", monospace;
}

.icon {
  flex: none;
  width: 16px;
  height: 16px;
}

/* Toolbars */
.toolbar-row {
  position: relative;
  display: flex;
  flex: none;
  white-space: nowrap;
}

.top-row {
  gap: 4px;
  height: 33px;
  padding: 3px 0 0 2px;
}

.edit-row {
  gap: 7px;
  height: 28px;
}

.draw-row {
  gap: 3px;
  height: 28px;
}

.spare-row {
  height: 25px;
  padding-left: 412px;
}

.bar {
  display: flex;
  flex: none;
  align-items: center;
  height: 25px;
  background: linear-gradient(#fcfcfc, #f0f0f0);
}

.spare {
  width: 31px;
  height: 22px;
}

.grip {
  width: 2px;
  height: 15px;
  margin: 0 2px 0 3px;
  background: repeating-linear-gradient(#b4b4b4 0 2px, transparent 2px 4px);
}

.tool {
  display: flex;
  flex: none;
  align-items: center;
  height: 23px;
  padding: 0 3px 0 2px;
  border: 1px solid transparent;
}

.tool.on {
  border-color: #0078d7;
  background: #dfecf8;
}

.tool .label {
  margin-left: 4px;
}

.tool:disabled {
  color: #8d8d8d;
}

.white,
.tool.white {
  background: #fff;
}

.split {
  flex: none;
  display: flex;
  align-items: center;
  justify-content: center;
  width: 12px;
  height: 23px;
}

.arrow {
  flex: none;
  width: 0;
  height: 0;
  border: 3px solid transparent;
  border-top-color: #000;
  border-bottom: 0;
}

:disabled .arrow {
  border-top-color: #8d8d8d;
}

.menu-arrow {
  margin-left: 2px;
}

.sep {
  flex: none;
  width: 1px;
  height: 15px;
  margin: 0 2px 0 3px;
  background: #bdbdbd;
}

.combo {
  display: flex;
  flex: none;
  align-items: center;
  width: 69px;
  height: 22px;
  margin-right: 3px;
  padding-right: 3px;
  background: #fff;
}

.combo.narrow {
  width: 57px;
}

.combo.tiny {
  width: 54px;
}

.combo select {
  flex: 1;
  min-width: 0;
  height: 22px;
  padding-left: 3px;
  appearance: none;
  outline: none;
}

/* Hand-drawn highlight rings */
.mark {
  position: absolute;
  z-index: 5;
  fill: none;
  stroke: #f53737;
  stroke-width: 3;
  pointer-events: none;
}

.mark-draw {
  left: 728px;
  top: -9px;
  width: 278px;
  height: 46px;
}

.mark-menu {
  left: 24px;
  top: 61px;
  width: 138px;
  height: 40px;
}

.body {
  display: flex;
  flex: 1;
}

/* Panels */
.panel-title {
  display: flex;
  flex: none;
  align-items: center;
  height: 15px;
  font-size: 13px;
  line-height: 13px;
}

.nav .panel-title {
  margin-bottom: 1px;
  background: #0054e3;
  color: #fff;
}

.title-text {
  flex: 1;
}

.title-icon {
  width: 16px;
  height: 15px;
  margin-left: 2px;
}

.nav {
  display: flex;
  flex: none;
  flex-direction: column;
  width: 157px;
  margin-right: 1px;
}

.nav-tab {
  height: 21px;
  margin: 1px 1px 0;
  border: 1px solid #a0a0a0;
  border-top-color: #c8c8c8;
  background: #f0f0f0;
}

.nav-tools {
  display: flex;
  gap: 6px;
  height: 28px;
  padding: 6px 7px;
}

.nav-tools button {
  height: 16px;
}

.tree {
  flex: 1;
  margin: 0 1px 0 2px;
  padding-top: 1px;
  border: 1px solid #828790;
  border-bottom: 0;
  background: #fff;
}

.tree-root,
.tree-child {
  display: flex;
  align-items: center;
  height: 16px;
}

.root-guide {
  flex: none;
  width: 23px;
  height: 16px;
}

.root-name {
  margin-left: 4px;
}

.child-guide {
  flex: none;
  width: 40px;
  height: 16px;
  overflow: visible;
}

.tree-item {
  display: flex;
  gap: 3px;
  height: 16px;
  padding: 0 5px 0 3px;
  white-space: nowrap;
}

.tree-item.selected {
  background: #d9d9d9;
}

.cad-icon {
  margin-left: 6px;
}

.new-tag {
  align-self: flex-start;
  background: #ffe600;
  font: bold 9px/8px "DejaVu Sans", sans-serif;
}

.list-panel {
  display: flex;
  flex: none;
  flex-direction: column;
  width: 263px;
  margin: 0 3px 0 4px;
}

.list-panel .panel-title {
  border: 1px solid #8c8c8c;
  border-left: 0;
}

.list-tools {
  display: flex;
  align-items: center;
  height: 28px;
  padding-left: 2px;
  background: linear-gradient(#fcfcfc, #f0f0f0);
}

.new-wrap {
  position: relative;
}

.new-btn {
  display: flex;
  align-items: center;
  width: 58px;
  height: 22px;
  padding-left: 2px;
  border: 1px solid #808080;
  border-bottom: 0;
  background: #fafafa;
}

.new-btn .label {
  margin-left: 4px;
}

.new-menu {
  position: absolute;
  z-index: 3;
  left: 0;
  top: 22px;
  display: flex;
  flex-direction: column;
  width: 157px;
  padding: 1px;
  border: 1px solid #808080;
  background: linear-gradient(90deg, #f4f4f4 25px, #fcfcfc 25px);
  box-shadow: 3px 3px 4px rgba(0, 0, 0, 0.35);
}

.new-menu button {
  height: 23px;
  padding-left: 31px;
  text-align: left;
}

.list-btn {
  height: 16px;
  margin-left: 4px;
}

.list-btn + .list-btn {
  margin-left: 6px;
}

.search {
  display: flex;
  height: 24px;
}

.search input {
  flex: 1;
  min-width: 0;
  height: 24px;
  border: 1px solid #7a7a7a;
  border-width: 2px 1px 1px;
  background: #fff;
}

.search button {
  width: 25px;
  padding-top: 4px;
}

.list-body {
  flex: 1;
  margin-top: 2px;
  border: 1px solid #828790;
  border-bottom: 0;
  background: #fff;
}

.main {
  display: flex;
  flex: 1;
  flex-direction: column;
  min-width: 0;
  padding-left: 1px;
}

.scene {
  flex: 1;
  display: block;
  min-height: 0;
  margin-left: -1px;
  background: #000;
}

.scene-text {
  fill: #e0e0e0;
  font: 15px Roboto, "Liberation Sans", sans-serif;
  text-anchor: middle;
}

/* Property editor window */
.props {
  position: absolute;
  z-index: 4;
  left: 371px;
  top: 166px;
  bottom: 0;
  display: flex;
  flex-direction: column;
  width: 447px;
  background: #fff;
  box-shadow: 0 2px 14px rgba(0, 0, 0, 0.3);
}

.props-title {
  display: flex;
  align-items: flex-start;
  justify-content: space-between;
  height: 30px;
  padding: 7px 1px 0 8px;
  color: #999;
}

.props-title button {
  width: 19px;
  height: 19px;
  background: #e1e1e1;
  color: #fff;
  font-weight: bold;
}

.props-body {
  flex: 1;
  padding: 1px 1px 0 0;
  border: 1px solid #a0a0a8;
  border-bottom: 0;
}

table {
  width: 444px;
  border-collapse: separate;
  border-spacing: 0;
  table-layout: fixed;
}

.col-no {
  width: 22px;
}

.col-name {
  width: 121px;
}

.col-extra {
  width: 31px;
}

th,
td {
  height: 19px;
  padding: 0;
  border-right: 1px solid #bdbdbd;
  border-bottom: 1px solid #bdbdbd;
  font-weight: normal;
  line-height: 16px;
  white-space: nowrap;
}

thead th {
  height: 23px;
  background: linear-gradient(#fafafa, #f0f0f0);
}

thead .current {
  background: linear-gradient(#f8d795, #f2bf5c);
  color: #5a0050;
}

tbody th {
  background: linear-gradient(90deg, #fcfcfc, #efefef);
}

.picked th {
  background: #ffd58c;
  color: #5a0050;
}

.name-line {
  display: flex;
  align-items: center;
  justify-content: flex-start;
  height: 18px;
  padding: 1px 0 0 19px;
}

.blue {
  color: #0000ff;
}

.fold {
  color: #808080;
}

.fold .name-line {
  gap: 4px;
  padding-left: 2px;
}

.picked .name {
  background: #0078d7;
  color: #fff;
}

.plus {
  width: 13px;
  height: 13px;
  border: 1px solid #bdbdbd;
  background:
    linear-gradient(#000, #000) center / 7px 1px no-repeat,
    linear-gradient(#000, #000) center / 1px 7px no-repeat;
}

.value {
  padding-left: 1px;
}

.value-select {
  display: flex;
  height: 18px;
}

.value-select select {
  flex: 1;
  height: 16px;
  appearance: none;
  outline: none;
}

.value-select svg {
  width: 17px;
  height: 18px;
  border: 1px solid #adadad;
  background: #e1e1e1;
}

.extra {
  text-align: center;
}

.extra input {
  display: block;
  width: 13px;
  height: 13px;
  margin: 0 auto;
  border: 1px solid #222;
  background: #fff;
  appearance: none;
}
</style>
